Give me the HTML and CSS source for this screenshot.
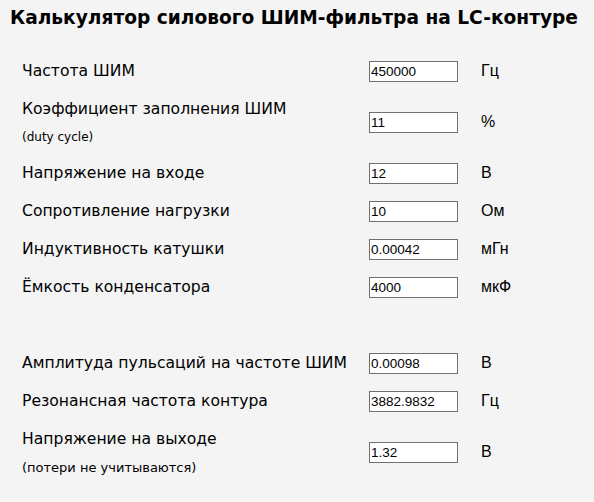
FILE: index.html
```html
<!DOCTYPE html>
<html lang="ru">
<head>
<meta charset="utf-8">
<title>Калькулятор силового ШИМ-фильтра на LC-контуре</title>
<link rel="stylesheet" href="styles.css">
</head>
<body>
<h1 class="title">Калькулятор силового ШИМ-фильтра на LC-контуре</h1>
<div class="calc">
  <div class="row">
    <div class="label">Частота ШИМ</div>
    <div class="field"><input class="num" type="text" value="450000"></div>
    <div class="unit">Гц</div>
  </div>
  <div class="row row-tall">
    <div class="label">Коэффициент заполнения ШИМ<span class="note">(duty cycle)</span></div>
    <div class="field"><input class="num" type="text" value="11"></div>
    <div class="unit">%</div>
  </div>
  <div class="row">
    <div class="label">Напряжение на входе</div>
    <div class="field"><input class="num" type="text" value="12"></div>
    <div class="unit">В</div>
  </div>
  <div class="row">
    <div class="label">Сопротивление нагрузки</div>
    <div class="field"><input class="num" type="text" value="10"></div>
    <div class="unit">Ом</div>
  </div>
  <div class="row">
    <div class="label">Индуктивность катушки</div>
    <div class="field"><input class="num" type="text" value="0.00042"></div>
    <div class="unit">мГн</div>
  </div>
  <div class="row">
    <div class="label">Ёмкость конденсатора</div>
    <div class="field"><input class="num" type="text" value="4000"></div>
    <div class="unit">мкФ</div>
  </div>
  <div class="row row-blank"></div>
  <div class="row">
    <div class="label">Амплитуда пульсаций на частоте ШИМ</div>
    <div class="field"><input class="num" type="text" value="0.00098"></div>
    <div class="unit">В</div>
  </div>
  <div class="row">
    <div class="label">Резонансная частота контура</div>
    <div class="field"><input class="num" type="text" value="3882.9832"></div>
    <div class="unit">Гц</div>
  </div>
  <div class="row row-tall">
    <div class="label">Напряжение на выходе<span class="note note-wide">(потери не учитываются)</span></div>
    <div class="field"><input class="num" type="text" value="1.32"></div>
    <div class="unit">В</div>
  </div>
</div>
</body>
</html>
```
FILE: styles.css
```css
html, body {
  margin: 0;
  padding: 0;
  background: #f4f4f4;
}
body {
  font-family: "DejaVu Sans", Verdana, sans-serif;
  color: #000;
  width: 594px;
  height: 502px;
  overflow: hidden;
}
.title {
  margin: 0;
  padding: 7px 0 0 10px;
  height: 52px;
  box-sizing: border-box;
  font-size: 18.6px;
  line-height: 22px;
  font-weight: bold;
  white-space: nowrap;
}
.calc {
  padding-left: 22px;
}
.row {
  display: grid;
  grid-template-columns: 347px 112px auto;
  align-items: center;
  height: 38px;
}
.row-tall {
  height: 64px;
}
.label {
  display: flex;
  flex-direction: column;
  font-size: 15.6px;
  line-height: 20px;
  white-space: nowrap;
}
.note {
  font-size: 12px;
  line-height: 16px;
  margin-top: 10px;
}
.note-wide {
  font-size: 13px;
  margin-top: 11px;
}
.num {
  display: block;
  box-sizing: border-box;
  width: 89px;
  height: 21px;
  margin: 0;
  padding: 0 1px;
  border: 1px solid #707070;
  background: #fff;
  font-family: "Liberation Sans", Arial, sans-serif;
  font-size: 13.5px;
  color: #000;
  outline: none;
}
.unit {
  font-family: "Liberation Sans", Arial, sans-serif;
  font-size: 16px;
  line-height: 20px;
}
```
